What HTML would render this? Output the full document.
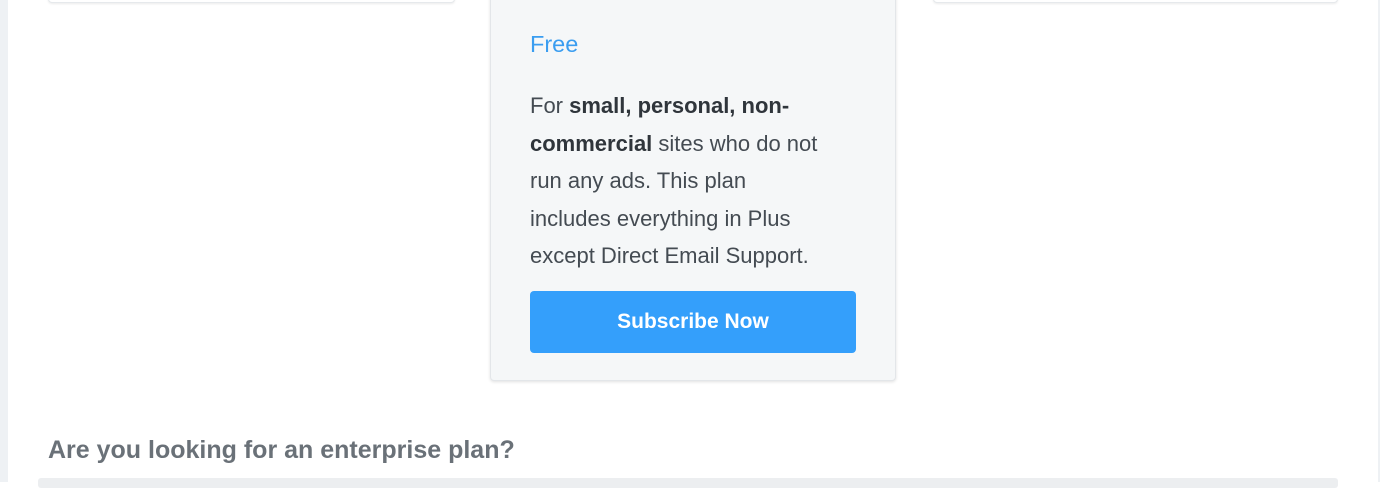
<!DOCTYPE html>
<html><head><style>
body{margin:0;width:1380px;height:482px;background:#fff;position:relative;overflow:hidden;font-family:"Liberation Sans",sans-serif;}
.ls{position:absolute;left:0;top:0;width:8px;height:482px;background:#eef1f4;}
.rs{position:absolute;right:0;top:0;width:2px;height:482px;background:#eef1f4;}
.tc{position:absolute;top:-10px;height:11px;border:1px solid #e6e9ec;border-radius:4px;background:#fff;box-shadow:0 1px 2px rgba(0,0,0,.08);}
.card{position:absolute;left:490px;top:-10px;width:404px;height:389px;background:#f5f7f8;border:1px solid #e3e6e9;border-radius:4px;box-shadow:0 1px 3px rgba(0,0,0,.12);}
.free{position:absolute;left:530px;top:31px;font-size:23.5px;color:#3a9df0;}
.p{position:absolute;left:530px;top:87px;width:360px;white-space:nowrap;font-size:22px;line-height:37.5px;color:#444b52;}
.p b{color:#2f353b;}
.btn{position:absolute;left:530px;top:291px;width:326px;height:62px;background:#349ffb;border-radius:4px;color:#fff;font-weight:bold;font-size:21px;text-align:center;line-height:62px;}
.q{position:absolute;left:48px;top:436px;font-size:25px;font-weight:bold;color:#6a7178;}
.inp{position:absolute;left:38px;top:478px;width:1300px;height:10px;background:#eceef0;border-radius:3px;}
</style></head><body>
<div class="ls"></div><div class="rs"></div>
<div class="tc" style="left:48px;width:405px"></div>
<div class="tc" style="left:933px;width:403px"></div>
<div class="card"></div>
<div class="free">Free</div>
<div class="p">For <b>small, personal, non-</b><br><b>commercial</b> sites who do not<br>run any ads. This plan<br>includes everything in Plus<br>except Direct Email Support.</div>
<div class="btn">Subscribe Now</div>
<div class="q">Are you looking for an enterprise plan?</div>
<div class="inp"></div>
</body></html>
